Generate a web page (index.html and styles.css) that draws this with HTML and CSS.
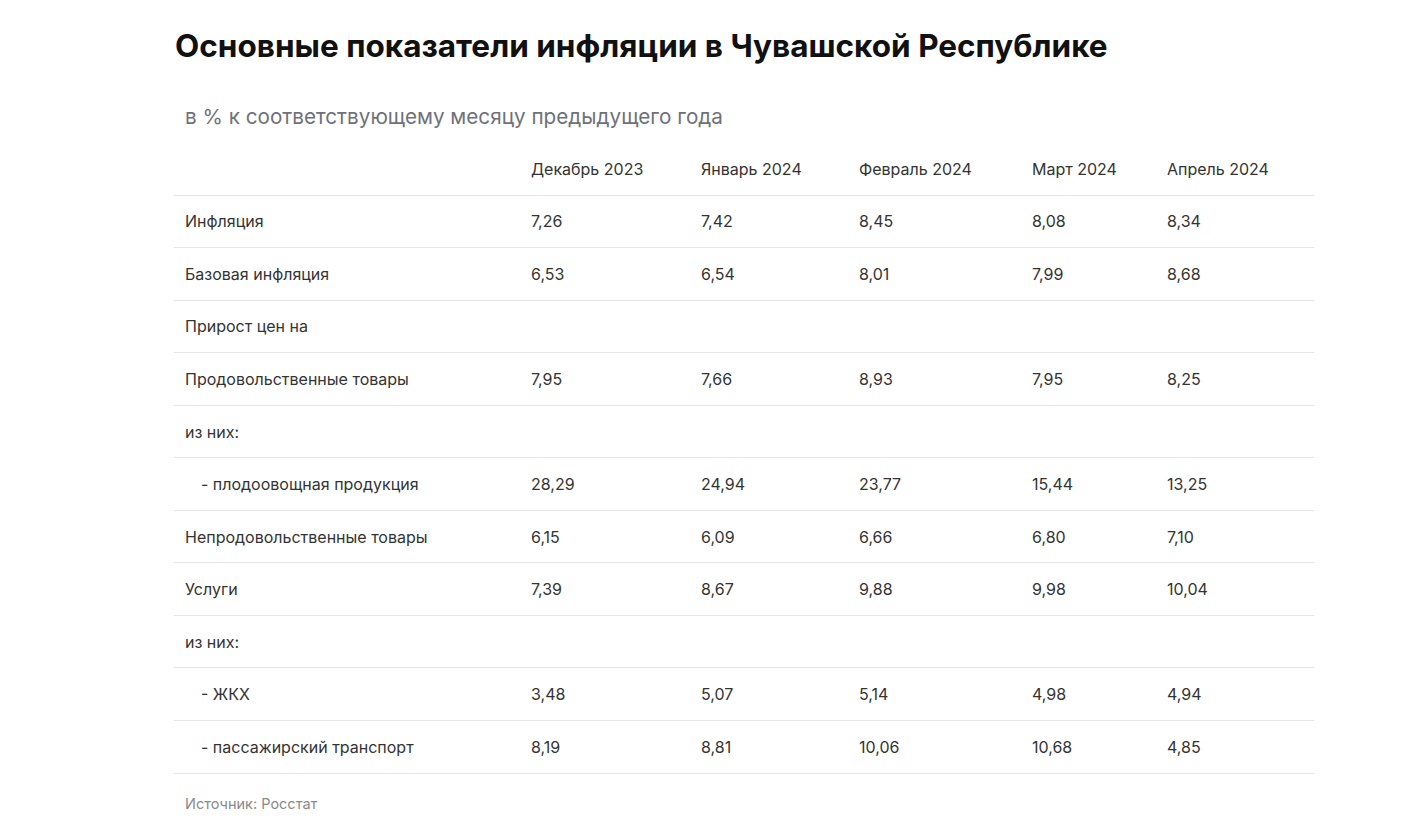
FILE: index.html
```html
<!DOCTYPE html>
<html lang="ru">
<head>
<meta charset="utf-8">
<link rel="stylesheet" href="styles.css">
</head>
<body>
<main class="page">
  <h1 class="title">Основные показатели инфляции в Чувашской Республике</h1>
  <p class="subtitle">в % к соответствующему месяцу предыдущего года</p>
  <table class="data">
    <colgroup>
      <col class="c1"><col class="c2"><col class="c3"><col class="c4"><col class="c5"><col class="c6">
    </colgroup>
    <thead>
      <tr><th></th><th>Декабрь 2023</th><th>Январь 2024</th><th>Февраль 2024</th><th>Март 2024</th><th>Апрель 2024</th></tr>
    </thead>
    <tbody>
      <tr><td>Инфляция</td><td>7,26</td><td>7,42</td><td>8,45</td><td>8,08</td><td>8,34</td></tr>
      <tr><td>Базовая инфляция</td><td>6,53</td><td>6,54</td><td>8,01</td><td>7,99</td><td>8,68</td></tr>
      <tr><td>Прирост цен на</td><td></td><td></td><td></td><td></td><td></td></tr>
      <tr><td>Продовольственные товары</td><td>7,95</td><td>7,66</td><td>8,93</td><td>7,95</td><td>8,25</td></tr>
      <tr><td>из них:</td><td></td><td></td><td></td><td></td><td></td></tr>
      <tr><td class="sub">- плодоовощная продукция</td><td>28,29</td><td>24,94</td><td>23,77</td><td>15,44</td><td>13,25</td></tr>
      <tr><td>Непродовольственные товары</td><td>6,15</td><td>6,09</td><td>6,66</td><td>6,80</td><td>7,10</td></tr>
      <tr><td>Услуги</td><td>7,39</td><td>8,67</td><td>9,88</td><td>9,98</td><td>10,04</td></tr>
      <tr><td>из них:</td><td></td><td></td><td></td><td></td><td></td></tr>
      <tr><td class="sub">- ЖКХ</td><td>3,48</td><td>5,07</td><td>5,14</td><td>4,98</td><td>4,94</td></tr>
      <tr><td class="sub">- пассажирский транспорт</td><td>8,19</td><td>8,81</td><td>10,06</td><td>10,68</td><td>4,85</td></tr>
    </tbody>
  </table>
  <p class="source">Источник: Росстат</p>
</main>
</body>
</html>
```

FILE: styles.css
```css
html, body {
  margin: 0;
  padding: 0;
  background: #ffffff;
}
body {
  font-family: Inter, "Noto Sans", sans-serif;
  color: #222222;
}
.page {
  width: 1140px;
  margin: 0 0 0 174px;
  padding-top: 28px;
}
.title {
  margin: 0 0 0 1px;
  font-size: 31.5px;
  line-height: 36px;
  font-weight: 700;
  color: #111111;
  letter-spacing: 0;
}
.subtitle {
  margin: 39px 0 0 11px;
  font-size: 20.7px;
  line-height: 28px;
  color: #6e7179;
}
.data {
  width: 1140px;
  border-collapse: collapse;
  table-layout: fixed;
  margin-top: 12px;
  font-size: 16px;
  color: #333333;
}
.c1 { width: 346px; }
.c2 { width: 170px; }
.c3 { width: 158px; }
.c4 { width: 173px; }
.c5 { width: 135px; }
.c6 { width: 158px; }
.data th, .data td {
  text-align: left;
  font-weight: 400;
  padding: 0 11px;
  height: 51.55px;
  border-bottom: 1px solid #e6e6e6;
  vertical-align: middle;
}
.data td.sub {
  padding-left: 27px;
}
.source {
  margin: 21px 0 0 11px;
  font-size: 14.5px;
  color: #8a8a8a;
}
```
